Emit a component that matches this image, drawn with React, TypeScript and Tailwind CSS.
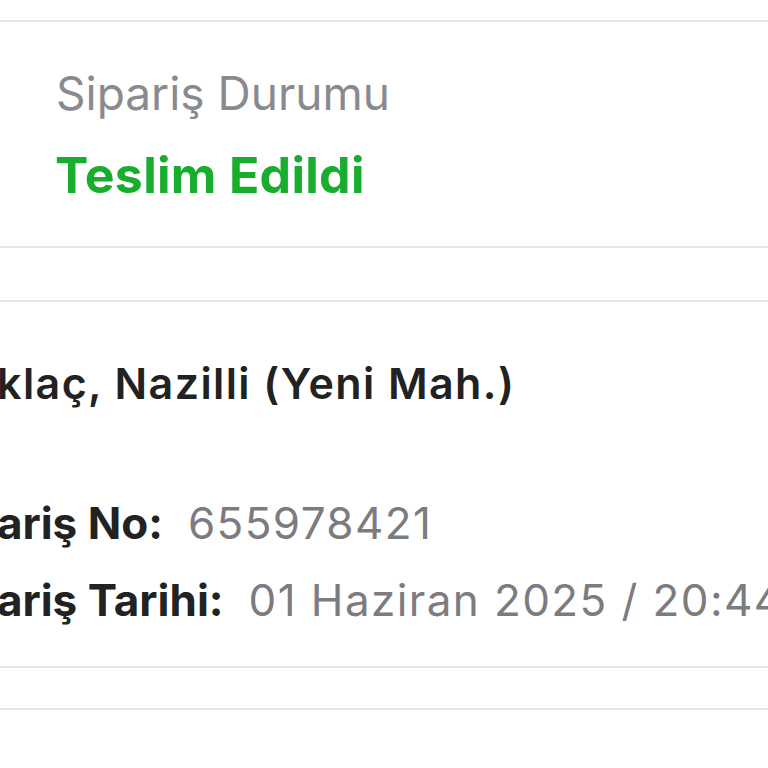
import React from 'react';

const FONT = { fontFamily: 'Inter, "Noto Sans", sans-serif' };

const details = [
  { label: 'Sipariş No:', value: '655978421' },
  { label: 'Sipariş Tarihi:', value: '01 Haziran 2025 / 20:44' },
];

export default function App() {
  return (
    <div style={FONT} className="w-[768px] h-[768px] overflow-hidden bg-white">
      <div className="h-[20px]" />

      {/* status card */}
      <section className="border-y-2 border-[#e6e6e6] bg-white pt-[43px] pb-[41px] pl-[56px]">
        <p className="text-[46px] leading-[56px] text-[#8a8a8e] whitespace-nowrap">Sipariş Durumu</p>
        <p className="mt-[24px] -ml-[1px] text-[50px] leading-[60px] font-bold tracking-[0.3px] text-[#18ad2c] whitespace-nowrap">
          Teslim Edildi
        </p>
      </section>

      <div className="h-[52px]" />

      {/* order info card */}
      <section className="border-y-2 border-[#e6e6e6] bg-white pt-[55px] pb-[38px] overflow-hidden">
        <p className="-ml-[3px] text-[43px] leading-[52px] font-semibold tracking-[1.4px] text-[#222] whitespace-nowrap">
          klaç, Nazilli (Yeni Mah.)
        </p>
        <div className="mt-[86px] flex flex-col gap-[21px] -ml-[72px]">
          {details.map((d) => (
            <div key={d.label} className="flex gap-[25px] text-[44px] leading-[56px] whitespace-nowrap">
              <span className="font-bold text-[#222]">{d.label}</span>
              <span className="tracking-[1.4px] text-[#7c7c80]">{d.value}</span>
            </div>
          ))}
        </div>
      </section>

      <div className="h-[40px]" />
      <section className="border-t-2 border-[#e6e6e6] h-[80px] bg-white" />
    </div>
  );
}
